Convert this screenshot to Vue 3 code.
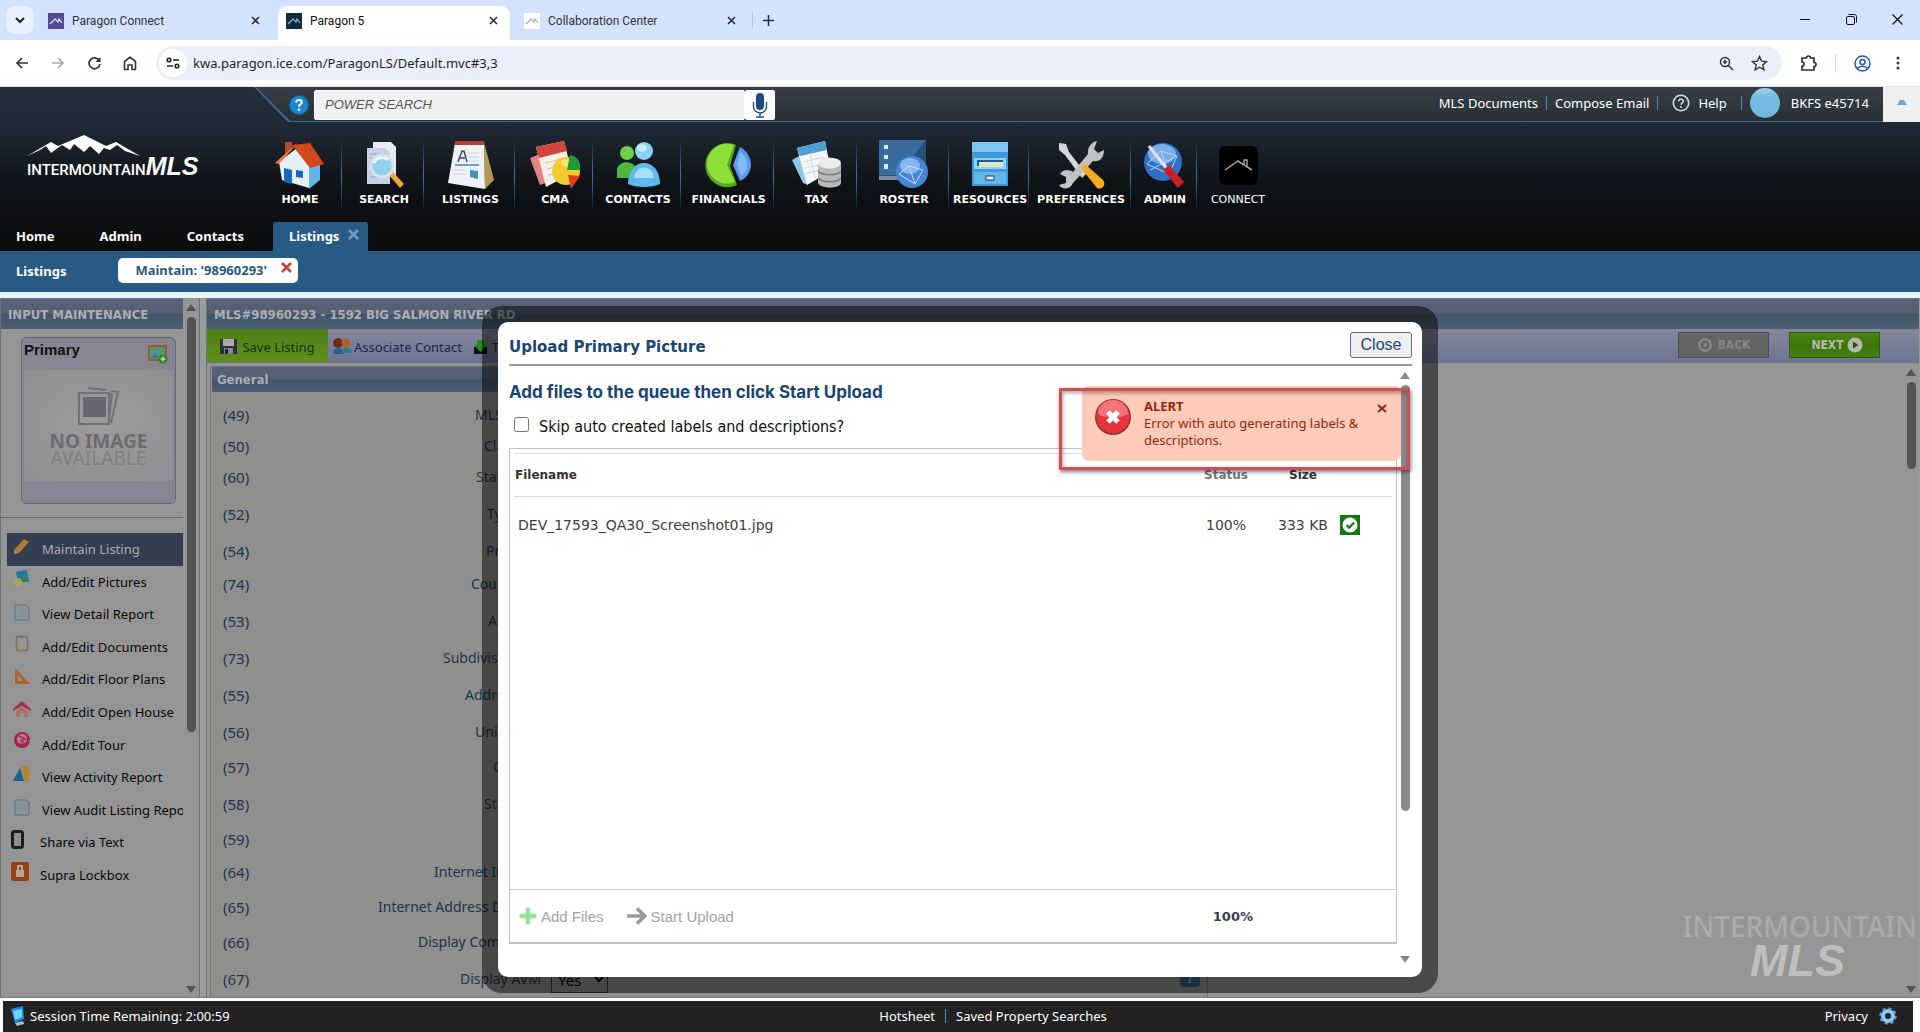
<template>
  <div class="window">
    <!-- browser tabs -->
    <div class="tab-strip">
      <button class="tab-search" aria-label="Search tabs">
        <svg width="10" height="7" viewBox="0 0 10 7"><path d="M1 1l4 4 4-4" fill="none" stroke="#1f1f1f" stroke-width="2" /></svg>
      </button>
      <div v-for="tab in browserTabs" :key="tab.title" class="tab" :class="{ active: tab.active }">
        <svg class="favicon" :class="tab.icon" width="16" height="16" viewBox="0 0 16 16">
          <path d="M2 11l5-5 3 3 1-3 3 4" fill="none" stroke="currentColor" stroke-width="1.2" />
        </svg>
        <span class="tab-title">{{ tab.title }}</span>
        <button class="tab-close" :aria-label="'Close ' + tab.title">
          <svg width="9" height="9" viewBox="0 0 9 9"><path d="M1 1l7 7M8 1l-7 7" stroke="#2b2f36" stroke-width="1.6" /></svg>
        </button>
      </div>
      <button class="new-tab" aria-label="New tab">
        <svg width="11" height="11" viewBox="0 0 11 11"><path d="M5.500 0v11M0 5.500h11" stroke="#333" stroke-width="1.600" /></svg>
      </button>
      <div class="window-buttons">
        <button aria-label="Minimize"><svg width="11" height="11" viewBox="0 0 11 11"><path d="M0 5.500h10" stroke="#111" /></svg></button>
        <button aria-label="Restore"><svg width="11" height="11" viewBox="0 0 11 11" fill="none" stroke="#111"><rect x=".5" y="2.500" width="8" height="8" rx="1.500" /><path d="M2.500 .5h6a2 2 0 0 1 2 2v6" /></svg></button>
        <button aria-label="Close window"><svg width="11" height="11" viewBox="0 0 11 11"><path d="M.5 .5l10 10M10.500 .5l-10 10" stroke="#111" stroke-width="1.200" /></svg></button>
      </div>
    </div>

    <div class="address-bar">
      <button aria-label="Back"><svg width="14" height="12" viewBox="0 0 14 12"><path d="M13 6H2M7 1L2 6l5 5" fill="none" stroke="#333" stroke-width="1.700" /></svg></button>
      <button aria-label="Forward"><svg width="14" height="12" viewBox="0 0 14 12"><path d="M1 6h11M7 1l5 5-5 5" fill="none" stroke="#a5a7aa" stroke-width="1.600" /></svg></button>
      <button aria-label="Reload"><svg width="15" height="15" viewBox="0 0 15 15"><path d="M12.300 4.500A5.500 5.500 0 1 0 13 8" fill="none" stroke="#333" stroke-width="1.700" /><path d="M13.500 1v5h-5z" fill="#333" /></svg></button>
      <button aria-label="Home"><svg width="14" height="15" viewBox="0 0 14 15"><path d="M1.500 13.500V5.500L7 1.200l5.500 4.300v8H9V9H5v4.500z" fill="none" stroke="#333" stroke-width="1.600" /></svg></button>
      <div class="url">
        <span class="site-info">
          <svg width="14" height="12" viewBox="0 0 14 12" fill="none" stroke="#222" stroke-width="1.600"><circle cx="3" cy="3" r="1.800" /><path d="M7 3h6M1 9h6" /><circle cx="11" cy="9" r="1.800" /></svg>
        </span>
        <input class="url-input" type="text" aria-label="Address" value="kwa.paragon.ice.com/ParagonLS/Default.mvc#3,3" />
        <svg width="15" height="15" viewBox="0 0 15 15" fill="none" stroke="#333" stroke-width="1.500"><circle cx="6" cy="6" r="4.500" /><path d="M9.500 9.500l4.500 4.500M6 4v4M4 6h4" /></svg>
        <svg width="17" height="16" viewBox="0 0 17 16"><path d="M8.500 1.500l2.100 4.600 5 .5-3.800 3.300 1.100 4.900-4.400-2.600-4.400 2.600 1.100-4.900L1.400 6.600l5-.5z" fill="none" stroke="#333" stroke-width="1.400" /></svg>
      </div>
      <button class="extensions" aria-label="Extensions"><svg width="18" height="18" viewBox="0 0 18 18"><path d="M2 4h4.500a2 2 0 1 1 4 0H14v4.500a2 2 0 1 1 0 4V16H2v-4a2 2 0 1 0 0-4z" fill="none" stroke="#333" stroke-width="1.700" /></svg></button>
      <i class="bar-rule"></i>
      <button aria-label="Profile"><svg width="17" height="17" viewBox="0 0 17 17" fill="none" stroke="#1a5fb4" stroke-width="1.500"><circle cx="8.500" cy="8.500" r="7.500" /><circle cx="8.500" cy="7" r="2.500" /><path d="M3.500 13.500c2-3 8-3 10 0" /></svg></button>
      <button aria-label="Menu"><svg width="4" height="14" viewBox="0 0 4 14" fill="#333"><circle cx="2" cy="2" r="1.500" /><circle cx="2" cy="7" r="1.500" /><circle cx="2" cy="12" r="1.500" /></svg></button>
    </div>

    <!-- application header -->
    <header class="app-header">
      <div class="top-strip">
        <div class="search">
          <svg width="20" height="20" viewBox="0 0 20 20"><circle cx="10" cy="10" r="9.500" fill="#1b87d0" stroke="#0f5f9b" /><path d="M7.200 7.600c0-3.600 5.800-3.400 5.600-.2-.1 2-2.800 2-2.800 4.400" fill="none" stroke="#fff" stroke-width="2" /><circle cx="10" cy="14.700" r="1.300" fill="#fff" /></svg>
          <input class="search-input" type="text" aria-label="Power search" placeholder="POWER SEARCH" />
          <button class="mic" aria-label="Voice search">
            <svg width="16" height="26" viewBox="0 0 16 26"><rect x="4" y="1" width="8" height="17" rx="4" fill="#20497b" /><path d="M1.500 10v4.500a6.500 6.500 0 0 0 13 0V10M8 21v4M4 25h8" fill="none" stroke="#20497b" stroke-width="1.400" /></svg>
          </button>
        </div>
        <div class="user-links">
          <a href="#">MLS Documents</a>
          <i class="divider"></i>
          <a href="#">Compose Email</a>
          <i class="divider"></i>
          <a href="#" class="help">
            <svg width="18" height="18" viewBox="0 0 18 18"><circle cx="9" cy="9" r="7.700" fill="none" stroke="#ddd" stroke-width="1.600" /><path d="M6.700 7.300c0-3 4.800-2.800 4.600 0-.1 1.600-2.300 1.600-2.300 3.400" fill="none" stroke="#ddd" stroke-width="1.500" /><circle cx="9" cy="13" r="1" fill="#ddd" /></svg>
            Help
          </a>
          <i class="divider"></i>
          <span class="avatar"></span>
          <span>BKFS e45714</span>
        </div>
        <button class="collapse" aria-label="Collapse header">
          <svg width="10" height="6" viewBox="0 0 10 6"><path d="M0 6l3-5h4l3 5z" fill="#6fa8d8" /></svg>
        </button>
      </div>

      <div class="brand-row">
        <div class="logo">
          <svg width="114" height="22" viewBox="0 0 114 22">
            <path d="M0 21L24 7l7 4L57 0l22 11 10-4 24 14-15-5-8-6-7 5-6-2-5 6-9-8-6 6-10-8-4 6-8-5-11 8-5-7-6 4z" fill="#fff" />
          </svg>
          <div class="logo-text"><span>INTERMOUNTAIN</span><b>MLS</b></div>
        </div>
        <nav class="main-nav">
          <a v-for="item in navItems" :key="item.label" href="#" class="nav-item" :class="{ light: item.light }">
            <svg width="50" height="50" viewBox="0 0 50 50">
              <g v-if="item.icon === 'home'">
                <path d="M4 22l18-14 12 16v24L7 40z" fill="#e8eef6" />
                <path d="M34 24l11-4v20l-11 9z" fill="#5fb4ec" />
                <path d="M10 2h7v8l-7 6z" fill="#b8492c" />
                <path d="M0 23L22 3l-3 4L4 24z" fill="#f07a3c" />
                <path d="M17 5l18-2 14 21-14 4z" fill="#d2481c" />
                <path d="M9 28l8 2v14l-8-2z" fill="#1468c0" />
                <path d="M21 30l7 1v7l-7-1z" fill="#1468c0" />
              </g>
              <g v-else-if="item.icon === 'search'">
                <path d="M14 2h18l5 5v30H14z" fill="#e8eaf4" />
                <path d="M8 8h18l5 5v31H8z" fill="#c9d0e6" />
                <path d="M11 14h16M11 18h16M11 32h16M11 37h16" stroke="#9aa6cc" />
                <path d="M30 35l4-3 11 12-4 4z" fill="#f0a63a" />
                <circle cx="23" cy="26" r="11" fill="#8fd0ec" stroke="#d6e2ea" stroke-width="3" />
                <path d="M15 23c3-6 9-7 14-3" fill="none" stroke="#e2f6ff" stroke-width="3" />
              </g>
              <g v-else-if="item.icon === 'listings'">
                <path d="M38 2l10 38-9 9z" fill="#b39a4c" />
                <path d="M9 3l29 1 1 45-37-6z" fill="#eef1f6" />
                <path d="M9 1h29v4H9z" fill="#b1402e" />
                <path d="M12 22l4-11h2l3 11M13 18h6" fill="none" stroke="#3b4e78" stroke-width="1.500" />
                <path d="M22 13h11M22 17h11M22 21h11M8 30h11M8 34h11" stroke="#ccd5e2" />
                <path d="M9 25h24" stroke="#4a86bd" stroke-width="1.500" />
                <path d="M24 30l8 1v8l-8-2z" fill="#3e93b8" />
              </g>
              <g v-else-if="item.icon === 'cma'">
                <path d="M0 18l10-4 8 28-8 3z" fill="#e08484" />
                <path d="M6 7l28-6 8 32-26 14z" fill="#f6efe9" />
                <path d="M6 7l28-6 3 10-28 7z" fill="#d0443c" />
                <path d="M15 23l16-4M17 29l16-4M18 35l16-4" stroke="#c9c0c0" />
                <circle cx="36" cy="31" r="14" fill="#f2cb2e" />
                <path d="M31 21c6-4 12 0 12 5-5 2-12 1-12-5z" fill="#f8e27c" />
                <path d="M37 30l3-15c7 1 11 7 11 15z" fill="#1e9a3a" />
                <path d="M38 35l12 1-9 13z" fill="#e23c22" />
              </g>
              <g v-else-if="item.icon === 'contacts'">
                <circle cx="14" cy="13" r="7" fill="#6fd04a" />
                <path d="M4 38V29c2-9 16-9 20 0v9z" fill="#4fb838" />
                <circle cx="31" cy="11" r="9" fill="#8ad0f4" />
                <path d="M15 44c0-28 32-28 32 0-8 4-24 4-32 0z" fill="#5fb9ee" />
                <path d="M21 38c2-14 18-14 20 0z" fill="#a5e0fb" />
                <ellipse cx="29" cy="8" rx="5" ry="4" fill="#c6ebfc" />
              </g>
              <g v-else-if="item.icon === 'financials'">
                <path d="M32 5A22 22 0 1 0 33 45L26 26z" fill="#57a81c" />
                <path d="M30 5A20 20 0 1 0 31 42L23 25z" fill="#8de03a" />
                <path d="M36 7c14 8 15 27 0 34l-7-16z" fill="#5a9cf0" />
                <path d="M36 12c9 6 10 19 1 24l-4-11z" fill="#82bbfa" />
              </g>
              <g v-else-if="item.icon === 'tax'">
                <path d="M0 20l9-5 7 30-5-2z" fill="#8cc8e8" />
                <path d="M5 8l28-7 6 30-24 14z" fill="#f3f7fa" />
                <path d="M5 8l28-7 2 9-27 6z" fill="#4f9fd0" />
                <path d="M11 22l22-5M12 28l20-4M13 34l15-4M18 13l5 25" stroke="#cdd8e0" />
                <path d="M26 24v19c2 6 22 6 23 0V24z" fill="#b9b9b9" />
                <path d="M26 31c3 5 20 5 23 0M26 38c3 5 20 5 23 0" fill="none" stroke="#7d7d7d" stroke-width="1.500" />
                <ellipse cx="37.500" cy="23" rx="11.500" ry="5.500" fill="#ececec" />
              </g>
              <g v-else-if="item.icon === 'roster'">
                <path d="M0 0h47v36H0z" fill="#274f7c" />
                <path d="M0 0h47L20 35H0z" fill="#396b9c" />
                <path d="M5 5h4v4H5zM5 15h4v4H5zM5 24h4v5H5z" fill="#d5ecf4" />
                <path d="M0 36h22v4H0z" fill="#7c8da0" />
                <circle cx="33" cy="32" r="16" fill="#4784d6" />
                <ellipse cx="31" cy="26" rx="10" ry="8" fill="#86b7f0" />
                <path d="M20 34l10-8 14 4-8 14zM30 26l6 18" fill="none" stroke="#c9e1fb" />
              </g>
              <g v-else-if="item.icon === 'resources'">
                <path d="M7 2h36v12H7z" fill="#7cc6f0" />
                <path d="M7 12h36v34H7z" fill="#3d9ad8" />
                <path d="M9 18h32v11H9z" fill="#8fd2f4" />
                <path d="M12 20h26v6H12z" fill="#1b5d94" />
                <path d="M14 22h24v5H14z" fill="#e0e6c9" />
                <path d="M9 32h32v12H9z" fill="#63b6e6" />
                <rect x="21" y="36" width="8" height="4" fill="#e2eff6" stroke="#24435e" />
              </g>
              <g v-else-if="item.icon === 'prefs'">
                <path d="M3 3l7 1 3 8 17 22-4 4L9 15 3 10z" fill="#d6d6d6" />
                <path d="M41 1l-3 8 4 4 6-3c0 9-5 12-11 11L17 43c-3 7-11 7-14 2l7-2V37l-6-3c3-5 9-5 13-2l15-18c-1-6 3-12 9-13z" fill="#c2c2c2" />
                <path d="M25 28l4-4 18 16c4 6-2 10-6 8z" fill="#f2ae1e" />
              </g>
              <g v-else-if="item.icon === 'admin'">
                <circle cx="23" cy="22" r="19" fill="#2f6fc4" />
                <ellipse cx="22" cy="14" rx="14" ry="10" fill="#79aee8" />
                <path d="M7 24l14-13 16 5-8 18zM21 11l8 23M10 30l27-14" fill="none" stroke="#bcd8f6" />
                <path d="M9 6l18 23" stroke="#e4e4e4" stroke-width="3" />
                <path d="M23 30l6-5 15 17-6 6z" fill="#c81e2c" />
              </g>
              <g v-else>
                <rect x="6" y="6" width="39" height="39" rx="6" fill="#000" />
                <path d="M12 30l13-9 14 9M31 25v-5h3v7" fill="none" stroke="#9aa3a8" stroke-width="1.500" />
              </g>
            </svg>
            <span>{{ item.label }}</span>
          </a>
        </nav>
      </div>

      <nav class="page-tabs">
        <a href="#">Home</a>
        <a href="#">Admin</a>
        <a href="#">Contacts</a>
        <a href="#" class="current">Listings
          <svg width="11" height="11" viewBox="0 0 11 11"><path d="M1 1l9 9M10 1l-9 9" stroke="#6f9dc2" stroke-width="2.500" /></svg>
        </a>
      </nav>
    </header>

    <div class="sub-tabs">
      <a href="#">Listings</a>
      <a href="#" class="pill">Maintain: '98960293'
        <svg width="11" height="11" viewBox="0 0 11 11"><path d="M1 1l9 9M10 1l-9 9" stroke="#c9403a" stroke-width="2.600" /></svg>
      </a>
    </div>

    <main class="stage">
      <aside class="side">
        <div class="side-body">
          <h2 class="band">INPUT MAINTENANCE</h2>
          <div class="photo-card">
            <div class="photo-title">
              <b>Primary</b>
              <svg width="20" height="19" viewBox="0 0 20 19"><rect x="1" y="1" width="17" height="14" fill="#4c9a78" stroke="#a8542a" stroke-width="2" /><path d="M3 13l4-6 4 6z" fill="#3a7ab0" /><circle cx="15" cy="14" r="4.500" fill="#3f7d22" /><path d="M15 11.500v5M12.500 14h5" stroke="#c8d8b8" stroke-width="1.500" /></svg>
            </div>
            <div class="no-image">
              <svg width="42" height="38" viewBox="0 0 42 38" fill="none" stroke="#717175" stroke-width="2"><path d="M10 1l18 2M33 4l7 1-7 31M28 6l6 1-3 24" /><rect x="1" y="6" width="30" height="31" /><rect x="5" y="10" width="23" height="20" fill="#66666d" stroke="none" /></svg>
              <b>NO IMAGE</b>
              <span>AVAILABLE</span>
            </div>
          </div>
          <ul class="menu">
            <li v-for="entry in menu" :key="entry.label">
              <a href="#" :class="{ selected: entry.selected, tight: entry.tight }">
                <svg width="18" height="20" viewBox="0 0 18 20">
                  <g v-if="entry.icon === 'pencil'"><path d="M1 13L11 2l5 3L6 16l-5 1z" fill="#b07a35" /><path d="M1 13l5 3-5 1z" fill="#8e8a84" /></g>
                  <g v-else-if="entry.icon === 'pictures'"><path d="M3 3l11-2 2 12H5z" fill="#1f7a98" /><path d="M8 10l5-5 3 8z" fill="#2d8a54" /><circle cx="5" cy="13" r="4" fill="#a8a65c" /></g>
                  <g v-else-if="entry.icon === 'report'"><path d="M2 3h11l3 3v12H2z" fill="#8b9499" stroke="#56707c" /><path d="M5 8h8M5 11h8M5 14h8" stroke="#7b8e97" /></g>
                  <g v-else-if="entry.icon === 'clipboard'"><rect x="3.500" y="2.500" width="11" height="14" rx="1" fill="#959595" stroke="#7f6f60" stroke-width="1.500" /><path d="M6 1h6v3H6z" fill="#7a7a7a" /></g>
                  <g v-else-if="entry.icon === 'plans'"><path d="M2 1l15 16H2zM5 9v5h5z" fill="#a8672a" fill-rule="evenodd" /></g>
                  <g v-else-if="entry.icon === 'house'"><path d="M0 9l9-8 9 8v2l-9-5-9 5z" fill="#9c3344" /><path d="M3 11l6-4 6 4v6h-4v-4H7v4H3z" fill="#a8706a" /></g>
                  <g v-else-if="entry.icon === 'tour'"><circle cx="9" cy="8" r="8" fill="#a1264e" /><circle cx="9" cy="7" r="5" fill="#b77c8e" /><path d="M6 4l6 3-4 2 4 3" stroke="#a1264e" stroke-width="1.500" fill="none" /></g>
                  <g v-else-if="entry.icon === 'activity'"><path d="M0 16L7 3l4 13z" fill="#1f5f8e" /><path d="M9 1h7v15h-5z" fill="#b5832a" /></g>
                  <g v-else-if="entry.icon === 'phone'"><rect x="1.500" y="1.500" width="10" height="16" rx="2" fill="#8f8f8f" stroke="#1c1c1c" stroke-width="3" /></g>
                  <g v-else><rect width="18" height="19" rx="2" fill="#98400f" /><rect x="5" y="8" width="8" height="7" fill="#b8a494" /><path d="M7 8V4h4v4" fill="none" stroke="#b8a494" stroke-width="2" /></g>
                </svg>
                <span>{{ entry.label }}</span>
              </a>
            </li>
          </ul>
        </div>
        <div class="scrollbar dim"><i class="up"></i><i class="thumb side-thumb"></i><i class="down"></i></div>
      </aside>

      <section class="listing">
        <h2 class="band">MLS#98960293 - 1592 BIG SALMON RIVER RD</h2>
        <div class="toolbar">
          <button class="save">
            <svg width="17" height="17" viewBox="0 0 17 17"><path d="M0 1h17v15H0z" fill="#2d3138" /><path d="M3 1h11v7H3z" fill="#a9adb2" /><path d="M4 10h9v6H4z" fill="#84888e" /><path d="M5 11h3v5H5z" fill="#222" /></svg>
            Save Listing
          </button>
          <button class="tool">
            <svg width="20" height="17" viewBox="0 0 20 17"><circle cx="6" cy="5" r="5" fill="#6e2c1c" /><path d="M1 16c0-8 10-8 11 0z" fill="#245f96" /><circle cx="14" cy="5" r="4.500" fill="#b0602e" /><path d="M9 15c1-7 10-7 11 0z" fill="#2a7c8c" /></svg>
            Associate Contact
          </button>
          <button class="tool">
            <svg width="15" height="16" viewBox="0 0 15 16"><path d="M1 8h13v7H1z" fill="#111" /><path d="M4 1h7v5h3l-6.500 7L1 6h3z" fill="#1f8f1a" /></svg>
            Tax
          </button>
          <div class="steps">
            <button class="back" disabled>
              <svg width="16" height="16" viewBox="0 0 16 16"><circle cx="8" cy="8" r="7" fill="#858585" /><circle cx="8" cy="8" r="4.500" fill="#666" /><path d="M9.500 5v6L6 8z" fill="#8b8b8b" /></svg>
              BACK
            </button>
            <button class="next">
              NEXT
              <svg width="16" height="16" viewBox="0 0 16 16"><circle cx="8" cy="8" r="7.500" fill="#b3b8ae" /><path d="M6 4.500v7L11.500 8z" fill="#2c4c12" /></svg>
            </button>
          </div>
        </div>
        <div class="form-wrap">
          <div class="form">
            <h3 class="band general">General</h3>
            <div v-for="field in fields" :key="field.no" class="field" :class="field.size">
              <span class="no">({{ field.no }})</span>
              <span class="name"><span :style="{ width: field.width + 'px' }">{{ field.name }}</span></span>
              <template v-if="field.select">
                <select :aria-label="field.name" class="yes"><option>Yes</option></select>
                <button class="hint" aria-label="Field help">?</button>
              </template>
            </div>
          </div>
          <div class="watermark"><span>INTERMOUNTAIN</span><b>MLS</b></div>
          <div class="scrollbar dim"><i class="up"></i><i class="thumb main-thumb"></i><i class="down"></i></div>
        </div>
      </section>

      <!-- upload dialog -->
      <div class="overlay">
        <div class="frame">
          <div class="dialog" role="dialog" aria-labelledby="dialog-title">
            <div class="dialog-head">
              <h1 id="dialog-title">Upload Primary Picture</h1>
              <button class="close">Close</button>
            </div>
            <div class="dialog-body">
              <div class="dialog-content">
                <h2>Add files to the queue then click Start Upload</h2>
                <label class="skip"><input v-model="skipLabels" type="checkbox" /> Skip auto created labels and descriptions?</label>
                <div class="uploader">
                  <table>
                    <thead>
                      <tr>
                        <th>Filename</th>
                        <th class="status">Status</th>
                        <th class="size">Size</th>
                        <th class="state"></th>
                      </tr>
                    </thead>
                    <tbody>
                      <tr v-for="file in files" :key="file.name">
                        <td>{{ file.name }}</td>
                        <td class="status">{{ file.status }}</td>
                        <td class="size">{{ file.size }}</td>
                        <td class="state">
                          <svg width="20" height="20" viewBox="0 0 20 20"><path d="M0 0h20v20H0z" fill="#107a10" /><circle cx="10" cy="10" r="7.500" fill="#fff" /><path d="M6.500 10l2.700 2.700L14 7.500" fill="none" stroke="#107a10" stroke-width="2.200" /></svg>
                        </td>
                      </tr>
                    </tbody>
                  </table>
                  <div class="uploader-foot">
                    <button disabled>
                      <svg width="18" height="18" viewBox="0 0 18 18"><path d="M7 1h4v6h6v4h-6v6H7v-6H1V7h6z" fill="#90e090" stroke="#b4ecb4" /></svg>
                      Add Files
                    </button>
                    <button disabled>
                      <svg width="20" height="18" viewBox="0 0 20 18"><path d="M0 9h17M10 1.500L18 9l-8 7.500" fill="none" stroke="#999" stroke-width="3.500" /></svg>
                      Start Upload
                    </button>
                    <b class="total">100%</b>
                  </div>
                </div>
              </div>
              <div class="scrollbar"><i class="up"></i><i class="thumb dialog-thumb"></i><i class="down"></i></div>
            </div>
            <div class="alert" role="alert">
              <svg width="38" height="38" viewBox="0 0 38 38">
                <circle cx="19" cy="19" r="18" fill="#8e3a34" />
                <circle cx="19" cy="18.500" r="16.500" fill="#e8343a" />
                <path d="M4 16a15 14 0 0 1 30 0c-8 5-22 5-30 0z" fill="#f07478" />
                <path d="M14 14l10 10M24 14L14 24" stroke="#fff" stroke-width="5" />
              </svg>
              <p><b>ALERT</b><br />Error with auto generating labels &amp; descriptions.</p>
              <button aria-label="Dismiss alert">
                <svg width="10" height="9" viewBox="0 0 10 9"><path d="M1 1l8 7M9 1L1 8" stroke="#8f2a0e" stroke-width="2" /></svg>
              </button>
            </div>
            <div class="marker"></div>
          </div>
        </div>
      </div>
    </main>

    <footer class="footer">
      <div class="session">
        <svg width="14" height="20" viewBox="0 0 14 20"><path d="M0 3l12-3 1 13-9 4z" fill="#1c8fe0" /><path d="M2 5l9-2v8l-7 3z" fill="#6fd0f8" /><path d="M4 17l8-2 1 3-7 2z" fill="#a9bccb" /></svg>
        Session Time Remaining: 2:00:59
      </div>
      <div class="foot-links">
        <a href="#">Hotsheet</a>
        <i class="divider"></i>
        <a href="#">Saved Property Searches</a>
      </div>
      <div class="foot-right">
        <a href="#">Privacy</a>
        <svg width="18" height="18" viewBox="0 0 18 18"><circle cx="9" cy="9" r="7.500" fill="none" stroke="#4f93d8" stroke-width="2.500" stroke-dasharray="3.200 2.690" /><circle cx="9" cy="9" r="5" fill="none" stroke="#8fc2f0" stroke-width="4" /></svg>
      </div>
    </footer>
  </div>
</template>

<script setup>
import { ref } from "vue";

const skipLabels = ref(false);

const browserTabs = [
  { title: "Paragon Connect", icon: "purple" },
  { title: "Paragon 5", icon: "navy", active: true },
  { title: "Collaboration Center", icon: "white" },
];

const navItems = [
  { label: "HOME", icon: "home" },
  { label: "SEARCH", icon: "search" },
  { label: "LISTINGS", icon: "listings" },
  { label: "CMA", icon: "cma" },
  { label: "CONTACTS", icon: "contacts" },
  { label: "FINANCIALS", icon: "financials" },
  { label: "TAX", icon: "tax" },
  { label: "ROSTER", icon: "roster" },
  { label: "RESOURCES", icon: "resources" },
  { label: "PREFERENCES", icon: "prefs" },
  { label: "ADMIN", icon: "admin" },
  { label: "CONNECT", icon: "connect", light: true },
];

const menu = [
  { label: "Maintain Listing", icon: "pencil", selected: true },
  { label: "Add/Edit Pictures", icon: "pictures" },
  { label: "View Detail Report", icon: "report" },
  { label: "Add/Edit Documents", icon: "clipboard" },
  { label: "Add/Edit Floor Plans", icon: "plans" },
  { label: "Add/Edit Open House", icon: "house" },
  { label: "Add/Edit Tour", icon: "tour" },
  { label: "View Activity Report", icon: "activity" },
  { label: "View Audit Listing Report", icon: "report" },
  { label: "Share via Text", icon: "phone", tight: true },
  { label: "Supra Lockbox", icon: "lock", tight: true },
];

// width is the space each caption takes in front of its control
const fields = [
  { no: 49, name: "MLS #", width: 66, size: "h31" },
  { no: 50, name: "Class", width: 57, size: "h31" },
  { no: 60, name: "Status", width: 65, size: "h31" },
  { no: 52, name: "Type", width: 54, size: "h37" },
  { no: 54, name: "Price", width: 55, size: "h37" },
  { no: 74, name: "County", width: 70, size: "h33" },
  { no: 53, name: "Area", width: 53, size: "h37" },
  { no: 73, name: "Subdivision", width: 98, size: "h37" },
  { no: 55, name: "Address", width: 76, size: "h37" },
  { no: 56, name: "Unit #", width: 66, size: "h37" },
  { no: 57, name: "City", width: 48, size: "h35" },
  { no: 58, name: "State", width: 57, size: "h37" },
  { no: 59, name: "Zip", width: 43, size: "h35" },
  { no: 64, name: "Internet IDX", width: 107, size: "h33" },
  { no: 65, name: "Internet Address Display", width: 163, size: "h35" },
  { no: 66, name: "Display Comments", width: 123, size: "h35" },
  { no: 67, name: "Display AVM", width: 81, size: "h37", select: true },
];

const files = [{ name: "DEV_17593_QA30_Screenshot01.jpg", status: "100%", size: "333 KB" }];
</script>

<style>
body {
  margin: 0;
  background: #fff;
}
</style>

<style scoped>
* {
  box-sizing: border-box;
}
.window {
  display: flex;
  flex-direction: column;
  min-height: 100vh;
  font-family: "Noto Sans", Tahoma, sans-serif;
  font-size: 13px;
  line-height: 18px;
  color: #111;
}
button {
  border: 0;
  padding: 0;
  background: none;
  font: inherit;
  color: inherit;
  display: flex;
  align-items: center;
  justify-content: center;
}
a {
  color: inherit;
  text-decoration: none;
}
h1,
h2,
h3,
p,
ul {
  margin: 0;
  padding: 0;
}
svg {
  flex: none;
  display: block;
}

/* browser */
.tab-strip {
  display: flex;
  align-items: stretch;
  height: 40px;
  padding: 6px 0 0 6px;
  background: #d3e2fd;
}
.tab-search {
  width: 28px;
  height: 28px;
  border-radius: 8px;
  background: #e9f0fe;
}
.tab {
  display: flex;
  align-items: center;
  width: 232px;
  padding: 0 12px 5px 8px;
  margin-left: 6px;
  font-family: Roboto, sans-serif;
  font-size: 12px;
  color: #333;
}
.tab.active {
  background: #fff;
  border-radius: 9px 9px 0 0;
  color: #111;
}
.favicon {
  margin-right: 8px;
}
.favicon.purple {
  background: #544b95;
  color: #e8e6f6;
}
.favicon.navy {
  background: #0e2c3e;
  color: #8fb4c4;
}
.favicon.white {
  background: #fff;
  color: #9db3a4;
}
.tab-title {
  flex: 1;
}
.new-tab {
  position: relative;
  width: 32px;
  padding-bottom: 5px;
  margin: 0 0 0 4px;
}
.new-tab::before {
  content: "";
  position: absolute;
  left: 0;
  top: 6px;
  width: 1px;
  height: 16px;
  background: #a9c5ee;
}
.window-buttons {
  display: flex;
  margin-left: auto;
  padding: 0 0 7px;
}
.window-buttons button {
  width: 46px;
}
.address-bar {
  display: flex;
  align-items: center;
  height: 47px;
  padding: 0 4px;
  background: #fff;
  border-bottom: 1px solid #dfe3ea;
}
.address-bar > button {
  width: 36px;
  height: 36px;
}
.url {
  flex: 1;
  display: flex;
  align-items: center;
  gap: 17px;
  height: 34px;
  margin-left: 8px;
  padding: 0 14px 0 3px;
  border-radius: 17px;
  background: #ebeff9;
}
.site-info {
  display: flex;
  align-items: center;
  justify-content: center;
  width: 28px;
  height: 28px;
  border-radius: 14px;
  background: #fff;
}
.url-input {
  flex: 1;
  margin-left: -11px;
  padding: 0;
  border: 0;
  background: none;
  font: 13px "Noto Sans", sans-serif;
  color: #1f1f1f;
}
.address-bar > .extensions {
  margin-left: 9px;
}
.bar-rule {
  width: 1px;
  height: 18px;
  margin: 0 8px;
  background: #c5d7f2;
}

/* header */
.app-header {
  background: linear-gradient(#242d3a 0, #202a37 36px, #0f1216 100px, #0b0c0d 100%);
  color: #fff;
}
.top-strip {
  position: relative;
  display: flex;
  align-items: center;
  height: 35px;
  margin-left: 254px;
  padding-left: 35px;
  background: #3f6b8c;
  clip-path: polygon(0 0, 100% 0, 100% 100%, 34px 100%);
}
.top-strip::before {
  content: "";
  position: absolute;
  inset: 0 0 1px 0;
  background: linear-gradient(#373e48, #283033);
  clip-path: polygon(2px 0, 100% 0, 100% 100%, 36px 100%);
}
.top-strip > * {
  position: relative;
}
.search {
  display: flex;
  align-items: center;
  gap: 5px;
}
.search-input {
  width: 431px;
  height: 30px;
  padding: 0 10px;
  border: 1px solid #fff;
  border-radius: 2px;
  background: #f0f0f0;
  font: italic 13px "Liberation Sans", Arial, sans-serif;
  color: #555;
}
.search-input::placeholder {
  color: #555;
}
.mic {
  width: 30px;
  height: 30px;
  margin-left: -5px;
  background: #fff;
  border-radius: 2px;
}
.user-links {
  display: flex;
  align-items: center;
  gap: 8px;
  margin: 0 14px 0 auto;
  padding-bottom: 3px;
}
.divider {
  width: 1px;
  height: 14px;
  background: #5f88c0;
}
.help {
  display: flex;
  align-items: center;
  gap: 8px;
  padding: 0 6px;
}
.avatar {
  width: 30px;
  height: 30px;
  margin: 0 3px 0 0;
  border-radius: 50%;
  background: linear-gradient(#a3d4ec, #74b9e0 30%);
}
.collapse {
  width: 37px;
  height: 35px;
  padding-bottom: 5px;
  background: #efefef;
}
.brand-row {
  display: flex;
  height: 100px;
}
.logo {
  width: 256px;
  padding: 13px 0 0 27px;
}
.logo-text {
  display: flex;
  align-items: baseline;
  line-height: 18px;
  font-family: Roboto, Arial, sans-serif;
  font-size: 15px;
  font-weight: 500;
}
.logo-text b {
  font-family: "Liberation Sans", Arial, sans-serif;
  font-size: 25px;
  font-style: italic;
}
.main-nav {
  display: grid;
  grid-template-columns: 86px 82px 91px 78px 88px 93px 83px 92px 80px 102px 66px 80px;
  padding-top: 18px;
}
.nav-item {
  display: flex;
  flex-direction: column;
  align-items: center;
  height: 70px;
  padding-left: 3px;
  font: bold 11px/20px "DejaVu Sans", Verdana, sans-serif;
  border-right: 1px solid;
  border-image: linear-gradient(#16202c, #4a78ae 50%, #11161d) 1;
}
.nav-item:last-child {
  border-image: none;
  border-color: transparent;
}
.nav-item.light {
  font-weight: 400;
}
.page-tabs {
  display: flex;
  gap: 13px;
  height: 29px;
  font-weight: 700;
  line-height: 29px;
}
.page-tabs a {
  padding: 0 16px;
}
.page-tabs .current {
  display: flex;
  gap: 9px;
  padding-right: 9px;
  border-radius: 3px 3px 0 0;
  background: #285a84;
}
.page-tabs svg {
  margin-top: 7px;
}
.sub-tabs {
  display: flex;
  align-items: center;
  gap: 52px;
  height: 47px;
  padding: 0 16px 2px;
  background: #285a84;
  border-bottom: 6px solid #eaf4fb;
  font-weight: 700;
  color: #fff;
}
.pill {
  display: flex;
  gap: 14px;
  padding: 3px 6px 4px 17px;
  border-radius: 5px;
  background: #fff;
  color: #2a5880;
}
.pill svg {
  margin-top: 1px;
}

/* stage */
.stage {
  position: relative;
  flex: 1;
  display: flex;
  gap: 6px;
  padding-right: 1px;
  background: #9b9b9b;
  border-bottom: 1px solid #777;
}
.band {
  height: 31px;
  padding: 1px 8px 0 7px;
  background: linear-gradient(#5a6277, #545f72 48%, #40546a 52%, #4e6076);
  border-top: 1px solid #6e7488;
  font: bold 13px/29px "DejaVu Sans Condensed", Tahoma, sans-serif;
  color: #adaeb2;
}
.side {
  display: flex;
  width: 200px;
  background: #959595;
  border: solid #6f6f74;
  border-width: 0 1px 0 1px;
}
.side-body {
  flex: 1;
  min-width: 0;
}
.photo-card {
  width: 155px;
  height: 167px;
  margin: 8px 0 0 20px;
  padding: 0 2px;
  border: 1px solid #65656f;
  border-radius: 6px;
  background: #868593;
}
.photo-title {
  display: flex;
  justify-content: space-between;
  height: 32px;
  padding: 2px 5px 0 0;
  font: bold 15px/20px "Liberation Sans", Arial, sans-serif;
}
.photo-title svg {
  margin-top: 5px;
}
.no-image {
  display: flex;
  flex-direction: column;
  align-items: center;
  height: 111px;
  padding-top: 17px;
  background: radial-gradient(#9c9c9c, #8f8f93);
  font-size: 19px;
  line-height: 17px;
  color: #7e7e82;
}
.no-image svg {
  margin: 0 0 8px 0;
}
.no-image b {
  color: #6c6c70;
}
.menu {
  display: flex;
  flex-direction: column;
  height: 374px;
  margin-top: 13px;
  padding: 15px 0 0 6px;
  border-top: 1px solid #6a6a6a;
  list-style: none;
}
.menu li {
  flex: 1;
  display: flex;
}
.menu a {
  flex: 1;
  display: flex;
  align-items: center;
  gap: 11px;
  min-width: 0;
  padding-left: 6px;
  overflow: hidden;
  white-space: nowrap;
  color: #0a0a0a;
}
.menu a svg {
  margin-bottom: 5px;
}
.menu a.tight {
  padding-left: 4px;
}
.menu a.selected {
  background: #333f50;
  color: #a9adb3;
}
.scrollbar {
  flex: none;
  display: flex;
  flex-direction: column;
  align-items: center;
  width: 16px;
  padding: 6px 0 14px;
  color: #8a8a8a;
}
.scrollbar.dim {
  padding: 6px 0 4px;
  color: #535353;
}
.scrollbar .up,
.scrollbar .down {
  border: 5px solid transparent;
}
.scrollbar .up {
  border-top: 0;
  border-bottom: 7px solid currentColor;
}
.scrollbar .down {
  margin-top: auto;
  border-bottom: 0;
  border-top: 7px solid currentColor;
}
.thumb {
  width: 9px;
  margin-top: 6px;
  border-radius: 5px;
  background: currentColor;
}
.side-thumb {
  height: 415px;
}
.main-thumb {
  height: 87px;
}
.dialog-thumb {
  height: 426px;
}
.listing {
  flex: 1;
  display: flex;
  flex-direction: column;
  border-left: 1px solid #6f6f74;
  background: #959595;
}
.toolbar {
  display: flex;
  align-items: center;
  height: 34px;
  background: linear-gradient(#85869a, #6c7594);
  border-bottom: 1px solid #6b7080;
  color: #14294a;
}
.toolbar .save {
  align-self: stretch;
  width: 121px;
  padding-top: 2px;
  gap: 5px;
  background: linear-gradient(#4f8018, #5f8e1a);
  color: #1b3014;
}
.toolbar .tool {
  gap: 2px;
  margin-left: 4px;
  padding-top: 2px;
}
.toolbar .tool + .tool {
  margin-left: 11px;
  gap: 4px;
}
.steps {
  display: flex;
  gap: 20px;
  margin: 0 39px 2px auto;
  font: bold 12px "DejaVu Sans Condensed", Tahoma, sans-serif;
}
.steps button {
  width: 91px;
  height: 26px;
  gap: 5px;
  border: 1px solid #4c4c50;
  background: #646464;
  color: #838383;
}
.steps .next {
  gap: 3px;
  padding-left: 5px;
  background: linear-gradient(#4a8614, #3c7408 50%, #467f16);
  border-color: #2d5a12;
  color: #b4bcae;
}
.form-wrap {
  position: relative;
  flex: 1;
  display: flex;
}
.form {
  width: 998px;
  margin: 2px 0 0 3px;
  border: solid #747478;
  border-width: 0 1px;
  background: #8f8f8d;
}
.general {
  height: 26px;
  padding: 0 5px;
  margin: 1px 0 2px 1px;
  line-height: 25px;
}
.field {
  display: flex;
  align-items: flex-end;
  font-size: 14px;
  line-height: 20px;
  color: #1c3450;
}
.h31 {
  height: 31px;
}
.h33 {
  height: 33px;
}
.h35 {
  height: 35px;
}
.h37 {
  height: 37px;
}
.no {
  width: 60px;
  padding-left: 12px;
  font-size: 15px;
}
.name {
  width: 270px;
  display: flex;
  justify-content: flex-end;
}
.name span {
  white-space: nowrap;
}
.yes {
  width: 57px;
  height: 27px;
  margin: 0 0 -4px 10px;
  padding: 0 2px;
  border: 1px solid #333a44;
  background: transparent;
  font: 15px "Noto Sans", sans-serif;
}
.hint {
  width: 20px;
  height: 18px;
  margin: 0 7px 2px auto;
  border-radius: 4px;
  background: #3a5a84;
  font-weight: 700;
  color: #a0b0c4;
}
.watermark {
  flex: 1;
  display: flex;
  flex-direction: column;
  align-items: flex-end;
  justify-content: flex-end;
  margin-right: -14px;
  padding-bottom: 14px;
  font-size: 28px;
  font-weight: 500;
  line-height: 26px;
  color: #ababab;
}
.watermark b {
  margin-right: 72px;
  font: italic bold 45px/44px "Liberation Sans", Arial, sans-serif;
  color: #bfbfbf;
}

/* dialog */
.overlay {
  position: absolute;
  inset: 0;
  display: flex;
  justify-content: center;
  padding: 8px 0 4px;
}
.frame {
  width: 956px;
  padding: 16px;
  border-radius: 20px;
  background: rgba(0, 0, 0, 0.5);
}
.dialog {
  position: relative;
  display: flex;
  flex-direction: column;
  height: 100%;
  padding: 0 10px 0 11px;
  border-radius: 10px;
  background: #fff;
}
.dialog-head {
  display: flex;
  align-items: center;
  justify-content: space-between;
  height: 44px;
  padding-top: 8px;
  border-bottom: 2px solid #999;
}
.dialog-head h1 {
  font: bold 15px/20px "DejaVu Sans", Verdana, sans-serif;
  color: #1b4572;
}
.close {
  width: 62px;
  height: 26px;
  margin-bottom: 5px;
  border: 1px solid #5d6b7c;
  border-radius: 3px;
  background: #efefef;
  font: 16px "Liberation Sans", Arial, sans-serif;
  color: #1b4572;
}
.dialog-body {
  flex: 1;
  display: flex;
  margin-right: -1px;
}
.dialog-content {
  flex: 1;
  display: flex;
  flex-direction: column;
  padding: 14px 0 33px;
}
.dialog-content h2 {
  font: bold 17px/24px Inter, Arial, sans-serif;
  color: #164473;
}
.skip {
  display: flex;
  align-items: center;
  gap: 10px;
  height: 24px;
  margin: 11px 0 9px;
  padding-left: 5px;
  font: 16px/24px "DejaVu Sans Condensed", Tahoma, sans-serif;
}
.skip input {
  width: 15px;
  height: 15px;
  margin: 0 0 6px;
}
.uploader {
  flex: 1;
  display: flex;
  flex-direction: column;
  padding: 4px 4px 0;
  border: 1px solid #c2c2c2;
  border-bottom-width: 2px;
}
.uploader table {
  border-collapse: collapse;
  table-layout: fixed;
  width: 100%;
  font: 14px "DejaVu Sans", Verdana, sans-serif;
  color: #404040;
}
.uploader th {
  height: 43px;
  padding: 0 0 0 1px;
  border: solid #dcdcdc;
  border-width: 1px 0;
  font-size: 12px;
  text-align: left;
  color: #333;
}
.uploader td {
  height: 57px;
  padding: 0 0 0 4px;
}
.uploader .status {
  width: 80px;
  padding: 0;
  text-align: center;
}
.uploader th.status {
  color: #777;
}
.uploader .size {
  width: 74px;
  padding: 0;
  text-align: center;
}
.uploader .state {
  width: 52px;
  padding: 0;
}
.uploader-foot {
  display: flex;
  align-items: center;
  gap: 23px;
  height: 53px;
  margin: auto -4px 0;
  padding: 0 143px 0 9px;
  border-top: 1px solid #d0d0d0;
  font: 15px "Liberation Sans", Arial, sans-serif;
  color: #a3a3a3;
}
.uploader-foot button {
  gap: 4px;
}
.uploader-foot .total {
  margin-left: auto;
  font: bold 13px "DejaVu Sans", Verdana, sans-serif;
  color: #37404c;
}
.alert {
  position: absolute;
  top: 64px;
  right: 21px;
  display: flex;
  width: 319px;
  height: 75px;
  padding: 12px 14px 0 12px;
  border-radius: 7px;
  background: rgba(254, 200, 180, 0.94);
  line-height: 17px;
  color: #8f2a0e;
}
.alert p {
  flex: 1;
  padding: 0 8px 0 12px;
}
.alert button {
  align-self: flex-start;
  margin-top: 6px;
}
.marker {
  position: absolute;
  top: 66px;
  right: 12px;
  width: 351px;
  height: 82px;
  border: 3px solid #cf4f54;
  box-shadow: 1px 2px 4px rgba(0, 0, 0, 0.5), inset 1px 2px 4px rgba(0, 0, 0, 0.35);
}

/* footer */
.footer {
  display: flex;
  align-items: center;
  height: 34px;
  padding: 0 16px 2px 8px;
  margin: 0 7px 0 3px;
  background: #222;
  border-top: 3px solid #fff;
  color: #fff;
}
.session,
.foot-links,
.foot-right {
  display: flex;
  align-items: center;
}
.session {
  flex: 1;
  gap: 5px;
}
.foot-links {
  gap: 10px;
  margin-left: 78px;
}
.foot-right {
  flex: 1;
  justify-content: flex-end;
  gap: 11px;
}
</style>
